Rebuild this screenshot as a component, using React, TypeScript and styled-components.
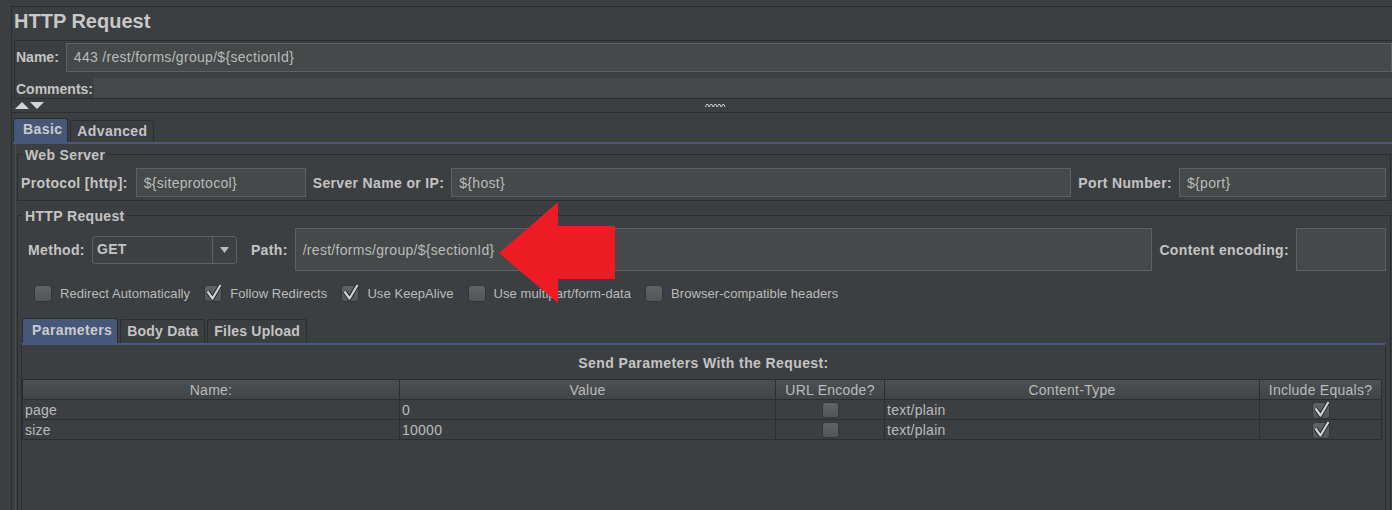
import React from 'react'
import styled, { createGlobalStyle } from 'styled-components'

const GlobalStyle = createGlobalStyle`
	html, body {
		margin: 0;
		padding: 0;
		background: #3c3f41;
	}
	body {
		font-family: "Liberation Sans", Arial, sans-serif;
		-webkit-font-smoothing: antialiased;
	}
	* {
		box-sizing: border-box;
	}
`

const dark = '#2b2d2e'
const blue = '#48597c'

const params = [
	{ name: 'page', value: '0', encode: false, type: 'text/plain', equals: true },
	{ name: 'size', value: '10000', encode: false, type: 'text/plain', equals: true },
]

const options = [
	{ label: 'Redirect Automatically', checked: false },
	{ label: 'Follow Redirects', checked: true },
	{ label: 'Use KeepAlive', checked: true },
	{ label: 'Use multipart/form-data', checked: false },
	{ label: 'Browser-compatible headers', checked: false },
]

const columns = ['Name:', 'Value', 'URL Encode?', 'Content-Type', 'Include Equals?']

const CheckBox = ({ checked, size = 18 }: { checked?: boolean; size?: number }) => (
	<CheckSvg width={size} height={size - 1} viewBox="0 0 18 17">
		<defs>
			<linearGradient id="cbFill" x1="0" y1="0" x2="0" y2="1">
				<stop offset="0" stopColor="#616466" />
				<stop offset="1" stopColor="#525557" />
			</linearGradient>
		</defs>
		<rect x="0.5" y="0.5" width="17" height="16" rx="3" fill="url(#cbFill)" stroke="#333537" />
		{checked && (
			<>
				<path d="M3.5 6.5 L8.5 13.5 L16.5 0" fill="none" stroke="#242627" strokeWidth="4.2" strokeLinejoin="round" />
				<path d="M3.5 6.5 L8.5 13.5 L16.5 0" fill="none" stroke="#d2d2d2" strokeWidth="2.2" strokeLinejoin="round" />
			</>
		)}
	</CheckSvg>
)

const App = () => {
	return (
		<>
			<GlobalStyle />
			<Root>
				<Frame>
					<Title>HTTP Request</Title>
					<NameBox>
						<NameRow>
							<Label $tight>Name:</Label>
							<TextField readOnly value="443 /rest/forms/group/${sectionId}" />
						</NameRow>
						<CommentsRow>
							<Label $tight>Comments:</Label>
							<CommentsField />
						</CommentsRow>
					</NameBox>
					<Splitter>
						<svg width="30" height="7" viewBox="0 0 30 7">
							<path d="M0 7 L7 0 L14 7 Z" fill="#d4d4d4" />
							<path d="M15 0 L29 0 L22 7 Z" fill="#d4d4d4" />
						</svg>
						<Grip width="21" height="5" viewBox="0 0 21 5">
							{[0, 1, 2, 3, 4].map(i => (
								<path key={i} d={`M${i * 4 + 0.5} 4 L${i * 4 + 1.5} 1.5 L${i * 4 + 3} 1.5 L${i * 4 + 4} 4`} stroke="#cfcfcf" fill="none" />
							))}
						</Grip>
					</Splitter>
					<TabsArea>
						<TabStrip>
							<Tab $selected>Basic</Tab>
							<Tab>Advanced</Tab>
						</TabStrip>
						<TabBody>
							<Inner>
								<Group>
									<Legend>Web Server</Legend>
									<ServerRow>
										<Label>Protocol [http]:</Label>
										<TextField readOnly value="${siteprotocol}" $width={170} />
										<Label>Server Name or IP:</Label>
										<TextField readOnly value="${host}" />
										<Label>Port Number:</Label>
										<TextField readOnly value="${port}" $width={207} />
									</ServerRow>
								</Group>
								<Group $open>
									<Legend>HTTP Request</Legend>
									<MethodRow>
										<Label>Method:</Label>
										<Combo>
											<ComboValue>GET</ComboValue>
											<ComboArrow>
												<svg width="9" height="6" viewBox="0 0 9 6">
													<path d="M0 0 H9 L4.5 6 Z" fill="#bbbbbb" />
												</svg>
											</ComboArrow>
										</Combo>
										<Label $space={7}>Path:</Label>
										<TextField readOnly value="/rest/forms/group/${sectionId}" $tall />
										<Label>Content encoding:</Label>
										<TextField readOnly value="" $width={90} $tall />
									</MethodRow>
									<OptionRow>
										{options.map(option => (
											<Option key={option.label}>
												<CheckBox checked={option.checked} />
												<OptionText>{option.label}</OptionText>
											</Option>
										))}
									</OptionRow>
									<Pane>
										<TabStrip>
											<Tab $selected $sub>
												Parameters
											</Tab>
											<Tab $sub>Body Data</Tab>
											<Tab $sub>Files Upload</Tab>
										</TabStrip>
										<PaneBody>
											<Caption>Send Parameters With the Request:</Caption>
											<Table>
												{columns.map(col => (
													<HeadCell key={col}>{col}</HeadCell>
												))}
												{params.map(row => (
													<React.Fragment key={row.name}>
														<Cell>{row.name}</Cell>
														<Cell>{row.value}</Cell>
														<Cell $center>
															<CheckBox checked={row.encode} size={17} />
														</Cell>
														<Cell>{row.type}</Cell>
														<Cell $center>
															<CheckBox checked={row.equals} size={18} />
														</Cell>
													</React.Fragment>
												))}
											</Table>
										</PaneBody>
									</Pane>
								</Group>
							</Inner>
						</TabBody>
					</TabsArea>
				</Frame>
				<Callout width="1392" height="510" viewBox="0 0 1392 510">
					<polygon points="499,253 558,202 558,226 615,226 615,279 558,279 558,303" fill="#ed1c24" />
				</Callout>
			</Root>
		</>
	)
}

export default App

const Root = styled.div`
	position: relative;
	display: flex;
	width: 1392px;
	height: 510px;
	overflow: hidden;
	padding: 6px 0 0 11px;
	background: #3c3f41;
	color: #bbbbbb;
`

const Frame = styled.div`
	flex: 1;
	min-width: 0;
	display: flex;
	flex-direction: column;
	padding-left: 2px;
	border-left: 1px solid ${dark};
	border-top: 1px solid ${dark};
`

const Title = styled.h1`
	margin: 0;
	height: 33px;
	font-size: 20px;
	line-height: 28px;
	font-weight: 700;
	color: #c8c8c8;
`

const NameBox = styled.div`
	display: flex;
	flex-direction: column;
	padding-left: 1px;
	border-top: 1px solid ${dark};
	border-left: 1px solid ${dark};
	border-bottom: 1px solid ${dark};
`

const NameRow = styled.div`
	display: flex;
	align-items: center;
	gap: 7px;
	height: 31px;
	padding-top: 1px;
`

const CommentsRow = styled.div`
	display: flex;
	align-items: flex-end;
	gap: 1px;
	height: 26px;

	& > span {
		line-height: 16px;
		padding-bottom: 1px;
	}
`

const CommentsField = styled.div`
	flex: 1;
	height: 20px;
	background: #45494a;
`

const Label = styled.span<{ $space?: number; $tight?: boolean }>`
	flex: none;
	margin-left: ${p => p.$space ?? 0}px;
	font-size: 14px;
	font-weight: 700;
	letter-spacing: ${p => (p.$tight ? 0 : 0.35)}px;
	color: #c4c4c4;
	white-space: nowrap;
`

const TextField = styled.input<{ $width?: number; $tall?: boolean }>`
	flex: ${p => (p.$width ? `0 0 ${p.$width}px` : '1 1 0')};
	min-width: 0;
	height: ${p => (p.$tall ? 43 : 29)}px;
	padding: 0 7px;
	border: 1px solid #5e6163;
	background: #45494a;
	color: #bbbbbb;
	font-family: "Liberation Sans", Arial, sans-serif;
	font-size: 14px;
	letter-spacing: 0.3px;
	outline: none;
`

const Splitter = styled.div`
	display: grid;
	grid-template-columns: 30px 1fr;
	align-items: center;
	height: 13px;
	padding-left: 1px;
`

const Grip = styled.svg`
	justify-self: center;
	margin-right: 7px;
`

const TabsArea = styled.div`
	flex: 1;
	display: flex;
	flex-direction: column;
	margin-left: -2px;
	padding-left: 1px;
	border-top: 1px solid ${dark};
`

const TabStrip = styled.div`
	display: flex;
	align-items: flex-end;
	gap: 2px;
	padding: 5px 0 0 0;
`

const Tab = styled.div<{ $selected?: boolean; $sub?: boolean }>`
	padding: ${p => (p.$selected ? '0 5px 2px 9px' : '0 6px 0 6px')};
	line-height: ${p => (p.$sub ? (p.$selected ? 22 : 23) : 21)}px;
	border: 1px solid ${dark};
	border-bottom: none;
	border-radius: 3px 3px 0 0;
	background: ${p => (p.$selected ? '#46577a' : '#3c3f41')};
	font-size: 14px;
	font-weight: 700;
	letter-spacing: ${p => (p.$sub && !p.$selected ? 0.2 : 0.4)}px;
	color: ${p => (p.$selected ? '#cbcbcb' : '#c4c4c4')};
	white-space: nowrap;
`

const TabBody = styled.div`
	flex: 1;
	display: flex;
	padding-left: 2px;
	border-top: 2px solid ${blue};
`

const Inner = styled.div`
	flex: 1;
	display: flex;
	flex-direction: column;
	gap: 5px;
	padding: 1px 1px 0 1px;
	border-left: 1px solid #4a4d4f;
`

const Group = styled.fieldset<{ $open?: boolean }>`
	flex: ${p => (p.$open ? 1 : 'none')};
	display: flex;
	flex-direction: column;
	min-width: 0;
	margin: 0;
	padding: ${p => (p.$open ? '4px 4px 0 3px' : '5px 4px 3px 3px')};
	border: 1px solid ${dark};
	border-bottom-width: ${p => (p.$open ? 0 : 1)}px;
`

const Legend = styled.legend`
	margin-left: 1px;
	padding: 2px 2px 0 3px;
	font-size: 14px;
	line-height: 16px;
	font-weight: 700;
	letter-spacing: 0.35px;
	color: #c4c4c4;
`

const ServerRow = styled.div`
	display: flex;
	align-items: center;
	gap: 7px;

	& > input:first-of-type {
		margin-left: 1px;
	}
`

const MethodRow = styled.div`
	display: flex;
	align-items: center;
	gap: 7px;
	height: 43px;
	padding-left: 7px;
`

const Combo = styled.div`
	flex: 0 0 145px;
	display: flex;
	height: 28px;
	border: 1px solid #5e6163;
	border-radius: 3px;
	background: #3e4143;
`

const ComboValue = styled.div`
	flex: 1;
	padding-left: 4px;
	font-size: 14px;
	font-weight: 700;
	letter-spacing: 0.35px;
	line-height: 25px;
	color: #c4c4c4;
`

const ComboArrow = styled.div`
	flex: 0 0 24px;
	display: flex;
	align-items: center;
	justify-content: center;
	border-left: 1px solid #5e6163;
`

const OptionRow = styled.div`
	display: flex;
	align-items: center;
	gap: 14px;
	margin-top: 14px;
	padding-left: 13px;
`

const Option = styled.div`
	display: flex;
	align-items: center;
	gap: 8px;
`

const CheckSvg = styled.svg`
	flex: none;
	overflow: visible;
`

const OptionText = styled.span`
	font-size: 13px;
	letter-spacing: 0.07px;
	color: #bbbbbb;
	white-space: nowrap;
`

const Pane = styled.div`
	flex: 1;
	display: flex;
	flex-direction: column;
	margin-top: 11px;

	& > div:first-child {
		padding-left: 1px;
	}
`

const PaneBody = styled.div`
	flex: 1;
	display: flex;
	flex-direction: column;
	border-top: 2px solid ${blue};
	border-left: 1px solid ${dark};
	border-right: 1px solid ${dark};
`

const Caption = styled.div`
	height: 34px;
	line-height: 36px;
	text-align: center;
	font-size: 14px;
	font-weight: 700;
	letter-spacing: 0.4px;
	color: #c4c4c4;
`

const Table = styled.div`
	display: grid;
	grid-template-columns: 377px 376px 109px 375px 122px;
	grid-auto-rows: 20px;
	align-self: flex-start;
	border-left: 1px solid ${dark};
	border-top: 1px solid ${dark};
`

const HeadCell = styled.div`
	padding-top: 2px;
	line-height: 17px;
	text-align: center;
	font-size: 14px;
	letter-spacing: 0.25px;
	color: #bbbbbb;
	background: linear-gradient(#4d5052, #414446);
	border-right: 1px solid ${dark};
	border-bottom: 1px solid ${dark};
	white-space: nowrap;
`

const Cell = styled.div<{ $center?: boolean }>`
	display: flex;
	align-items: center;
	justify-content: ${p => (p.$center ? 'center' : 'flex-start')};
	padding-left: ${p => (p.$center ? 0 : 2)}px;
	padding-top: 1px;
	font-size: 14px;
	letter-spacing: 0.25px;
	line-height: 19px;
	color: #bbbbbb;
	border-right: 1px solid ${dark};
	border-bottom: 1px solid ${dark};
`

const Callout = styled.svg`
	position: absolute;
	top: 0;
	left: 0;
	pointer-events: none;
`
